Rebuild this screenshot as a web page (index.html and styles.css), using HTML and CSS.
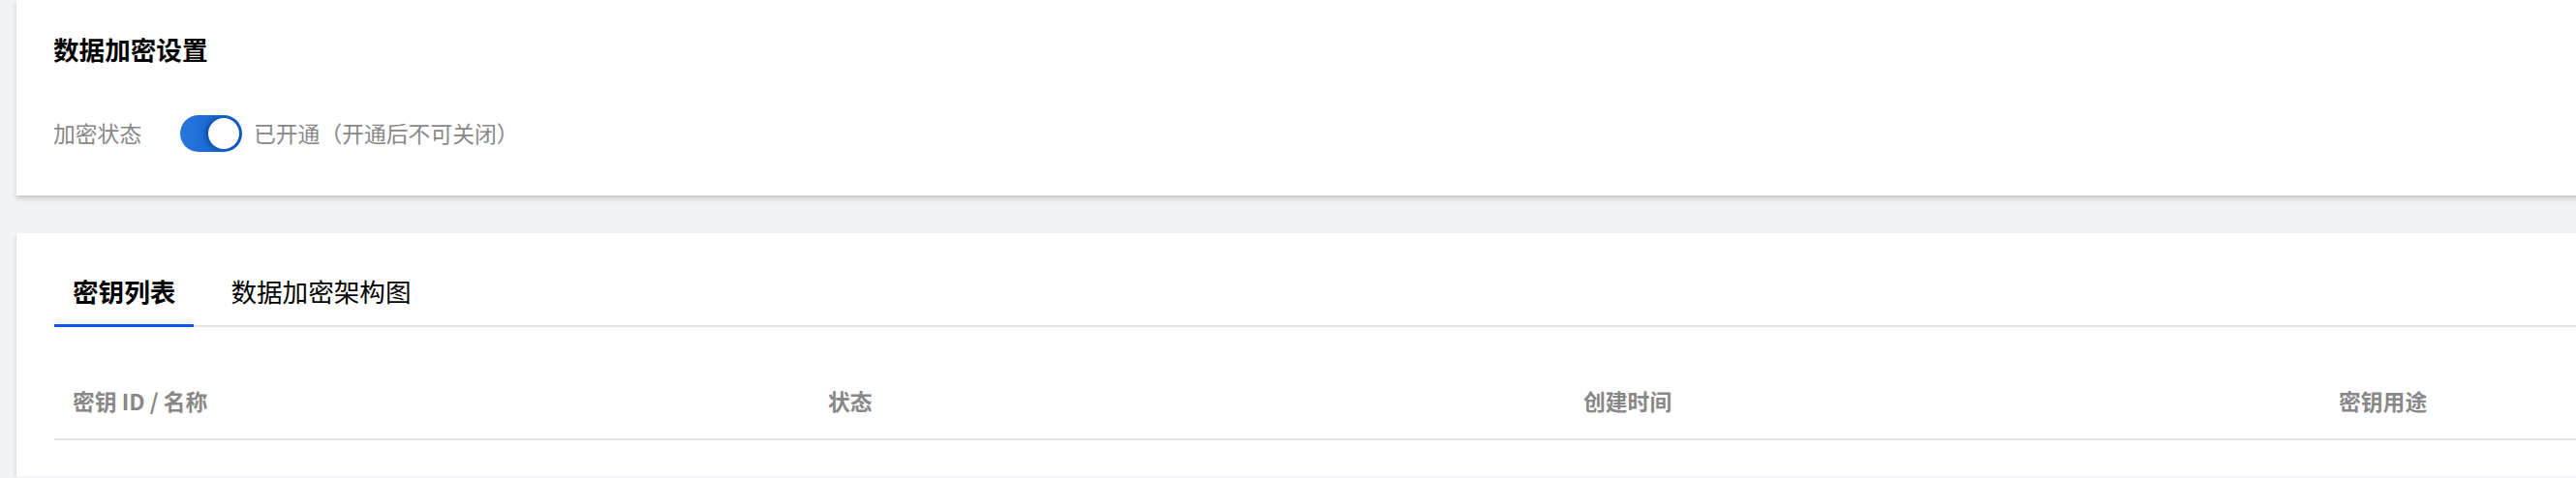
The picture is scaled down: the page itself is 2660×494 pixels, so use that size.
FILE: index.html
```html
<!DOCTYPE html>
<html lang="zh-CN">
<head>
<meta charset="utf-8">
<title>数据加密设置</title>
<link rel="stylesheet" href="styles.css">
</head>
<body>
<div class="page">
  <section class="card card-settings">
    <h2 class="card-title">数据加密设置</h2>
    <div class="form-row">
      <span class="form-label">加密状态</span>
      <span class="switch is-on" role="switch" aria-checked="true"><span class="switch-knob"></span></span>
      <span class="form-text">已开通（开通后不可关闭）</span>
    </div>
  </section>

  <section class="card card-keys">
    <div class="tabs">
      <div class="tab is-active">密钥列表</div>
      <div class="tab">数据加密架构图</div>
    </div>
    <div class="table">
      <div class="table-head">
        <div class="th">密钥 ID / 名称</div>
        <div class="th">状态</div>
        <div class="th">创建时间</div>
        <div class="th">密钥用途</div>
        <div class="th"></div>
      </div>
    </div>
  </section>
</div>
</body>
</html>
```

FILE: styles.css
```css
html, body {
  margin: 0;
  padding: 0;
  background: #f2f3f7;
  overflow: hidden;
}

body {
  font-family: "Noto Sans CJK SC", "Noto Sans", sans-serif;
  color: #000;
}

.page {
  display: flex;
  flex-direction: column;
  gap: 39px;
}

.card {
  background: #fff;
  margin: 0 -80px 0 17px;
  box-shadow: 0 3px 5px rgba(0, 0, 0, 0.18);
  overflow: hidden;
}

.card-settings {
  height: 202px;
  box-sizing: border-box;
  padding: 32px 38px 0 38px;
}

.card-title {
  margin: 0;
  font-size: 26.6px;
  line-height: 38px;
  font-weight: 700;
  color: #000;
}

.form-row {
  display: flex;
  align-items: center;
  height: 38px;
  margin-top: 49px;
}

.form-label {
  width: 131px;
  font-size: 22.8px;
  line-height: 38px;
  color: #888;
}

.switch {
  position: relative;
  display: inline-block;
  width: 64px;
  height: 38px;
  border-radius: 19px;
  background: linear-gradient(90deg, #2876db 0%, #1a6ad6 55%, #0d58c2 100%);
  box-sizing: border-box;
}

.switch-knob {
  position: absolute;
  top: 3px;
  right: 3px;
  width: 32px;
  height: 32px;
  border-radius: 50%;
  background: #fff;
  box-shadow: -3px 0 5px rgba(0, 30, 90, 0.45);
}

.form-text {
  margin-left: 12px;
  font-size: 22.8px;
  line-height: 38px;
  color: #888;
}

.card-keys {
  height: 251px;
  box-sizing: border-box;
  padding: 41px 0 0 39px;
}

.tabs {
  display: flex;
  border-bottom: 2px solid #e5e5e5;
}

.tab {
  position: relative;
  padding: 0 19px 16px;
  margin-right: 19px;
  font-size: 26.6px;
  line-height: 38px;
  color: #000;
}

.tab.is-active {
  font-weight: 700;
}

.tab.is-active::after {
  content: "";
  position: absolute;
  left: 0;
  right: 0;
  bottom: -2px;
  height: 3px;
  background: #0b55f2;
}

.table {
  margin-top: 37px;
}

.table-head {
  display: grid;
  grid-template-columns: repeat(5, 780px);
  border-bottom: 2px solid #e2e2e2;
}

.th {
  height: 78px;
  box-sizing: border-box;
  padding: 0 19px;
  display: flex;
  align-items: center;
  font-size: 22.8px;
  font-weight: 700;
  color: #888;
  white-space: nowrap;
}
```
